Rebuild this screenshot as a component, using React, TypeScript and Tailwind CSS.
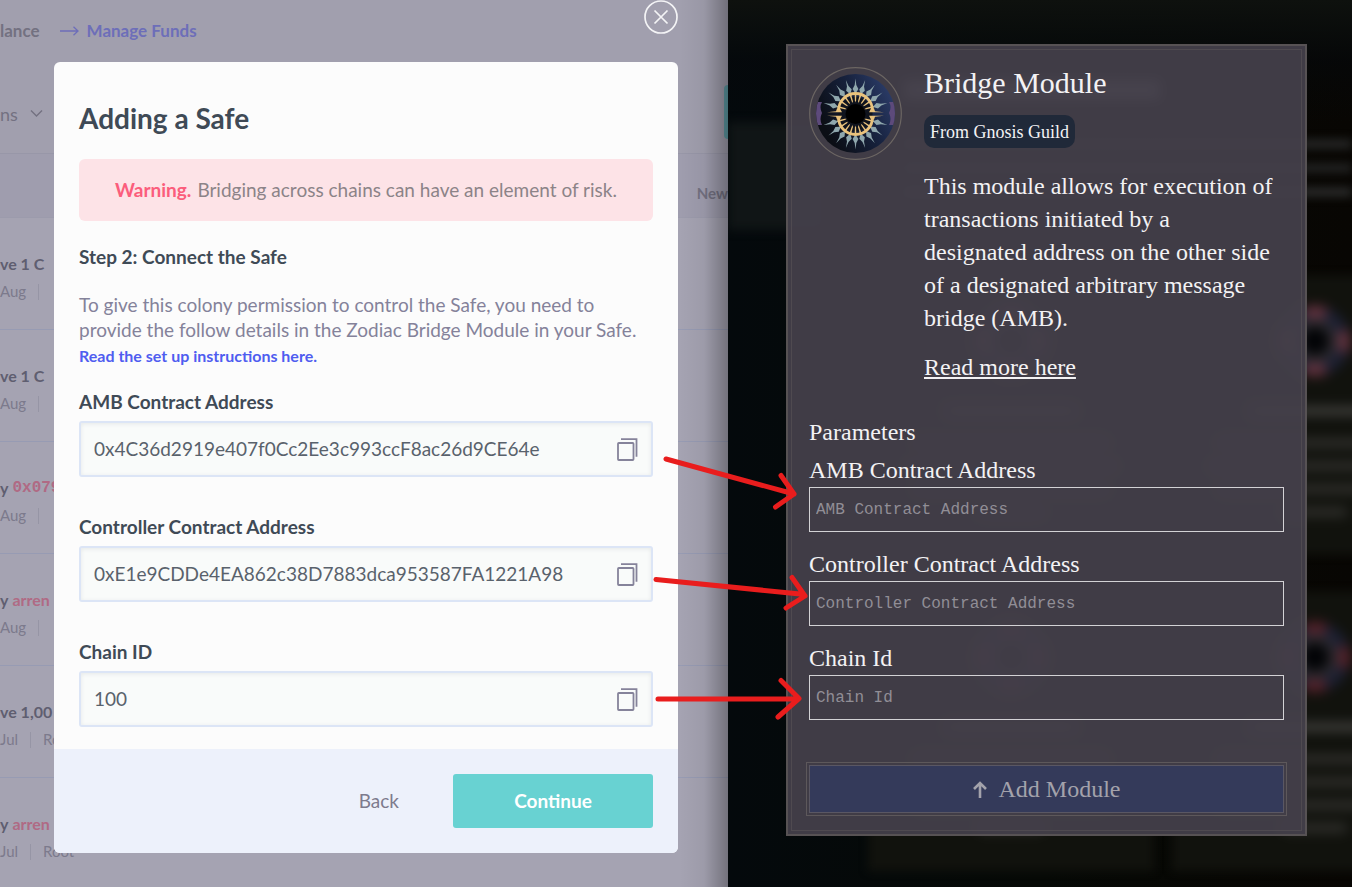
import React from "react";

const sans = "font-[Lato,'Noto_Sans',sans-serif]";
const serif = "font-['Liberation_Serif',serif]";

type Activity = { verb: string; subject?: string; mono?: boolean; date: string; domain?: string };

const activities: Activity[] = [
  { verb: "ve 1 C", date: "Aug" },
  { verb: "ve 1 C", date: "Aug" },
  { verb: "y", subject: "0x079", mono: true, date: "Aug" },
  { verb: "y", subject: "arren", date: "Aug" },
  { verb: "ve 1,00", date: "Jul", domain: "Root" },
  { verb: "y", subject: "arren", date: "Jul", domain: "Root" },
];

function ColonyPage() {
  return (
    <div aria-hidden="true" className="absolute inset-0 overflow-hidden bg-[#a19fae]">
      <div className="flex h-[62px] items-center gap-5 text-[17px] font-bold">
        <span className="text-[#737181]">lance</span>
        <span className="flex items-center gap-2 text-[#6d6eb9]">
          <svg width="19" height="10" viewBox="0 0 19 10" fill="none" stroke="currentColor" strokeWidth="1.3">
            <path d="M0 5h18M13.5 0.8L18 5l-4.5 4.2" />
          </svg>
          Manage Funds
        </span>
      </div>
      <div className="flex h-[92px] items-center justify-between border-b border-[#9897a8]">
        <div className="flex items-center gap-3 pt-3 text-lg text-[#737181]">
          ns
          <svg width="13" height="9" viewBox="0 0 13 9" fill="none" stroke="currentColor" strokeWidth="1.4">
            <path d="M1 1.5l5.5 5.5L12 1.5" />
          </svg>
        </div>
        <div className="mt-2 h-[54px] w-1 rounded-l-sm bg-[#5f9ba5]" />
      </div>
      <div className="flex h-[64px] items-center justify-end border-b border-[#9c9bac] bg-[#9f9dae] pt-4 text-[15px] font-bold text-[#737181]">
        New
      </div>
      <ul className="bg-[#a5a3b2]">
        {activities.map((a, i) => (
          <li key={i} className="flex h-[112px] flex-col justify-center gap-1 border-b border-[#979bb3] pt-2">
            <div className="flex h-6 items-center gap-1 text-base font-bold text-[#5f5e70]">
              <span>{a.verb}</span>
              {a.subject && (
                <span className={a.mono ? "font-['Liberation_Mono',monospace] text-[#b06a84]" : "text-[#b06a84]"}>
                  {a.subject}
                </span>
              )}
            </div>
            <div className="flex h-6 items-center gap-3 text-[15px] text-[#7c7a8c]">
              <span>{a.date}</span>
              <span className="h-4 w-px bg-[#9695a5]" />
              {a.domain && <span>{a.domain}</span>}
            </div>
          </li>
        ))}
      </ul>
      <div className="absolute inset-y-0 right-0 w-12 bg-gradient-to-r from-transparent via-black/5 to-black/30" />
    </div>
  );
}

function CopyIcon() {
  return (
    <svg width="21" height="23" viewBox="0 0 21 23" fill="none" stroke="#85839a" strokeWidth="1.8">
      <rect x="1" y="5" width="15.5" height="17" rx="0.8" />
      <path d="M4 1.2h15.5v17.5" />
    </svg>
  );
}

function SafeField({ id, label, value }: { id: string; label: string; value: string }) {
  return (
    <div className="flex flex-col gap-[7px]">
      <label htmlFor={id} className="text-[19px] leading-6 font-bold text-[#3f4a56]">
        {label}
      </label>
      <div className="flex h-14 items-center rounded-[3px] border-2 border-[#dce5f6] bg-[#f9fbfa] px-[13px] shadow-[inset_0_1px_4px_rgba(60,70,80,0.1)]">
        <input
          id={id}
          readOnly
          defaultValue={value}
          className="min-w-0 flex-1 bg-transparent text-[19px] text-[#59626c] outline-none"
        />
        <button type="button" aria-label={`Copy ${label}`}>
          <CopyIcon />
        </button>
      </div>
    </div>
  );
}

function SafeDialog() {
  return (
    <div className="relative flex flex-col gap-7 pr-[50px] pl-[54px]">
      <div className="flex justify-end">
        <button type="button" aria-label="Close">
          <svg width="34" height="34" viewBox="0 0 34 34" fill="none" stroke="#f4f4f6" strokeWidth="1.7">
            <circle cx="17" cy="17" r="16" />
            <path d="M10.5 10.5l13 13M23.5 10.5l-13 13" />
          </svg>
        </button>
      </div>
      <section className="overflow-hidden rounded-md bg-[#fcfcfc]">
        <div className="px-[25px] pt-10 pb-[22px]">
          <h1 className="text-[28px] leading-8 font-bold text-[#3f4a56]">Adding a Safe</h1>
          <p className="mt-[25px] flex h-[62px] items-center justify-center gap-[6px] rounded-md bg-[#fde3e7] text-[19px] text-[#8c8388]">
            <strong className="text-[#fb5d7c]">Warning.</strong>
            <span>Bridging across chains can have an element of risk.</span>
          </p>
          <h2 className="mt-6 text-[19px] leading-6 font-bold text-[#3f4a56]">Step 2: Connect the Safe</h2>
          <p className="mt-[23px] text-[19px] leading-[25px] text-[#84829a]">
            To give this colony permission to control the Safe, you need to
            <br />
            provide the follow details in the Zodiac Bridge Module in your Safe.
            <br />
            <a href="#setup" className="text-base leading-[25px] font-bold text-[#4f5df0]">
              Read the set up instructions here.
            </a>
          </p>
          <form className="mt-[22px] flex flex-col gap-[38px]">
            <SafeField id="safe-amb" label="AMB Contract Address" value="0x4C36d2919e407f0Cc2Ee3c993ccF8ac26d9CE64e" />
            <SafeField
              id="safe-controller"
              label="Controller Contract Address"
              value="0xE1e9CDDe4EA862c38D7883dca953587FA1221A98"
            />
            <SafeField id="safe-chain" label="Chain ID" value="100" />
          </form>
        </div>
        <div className="flex items-center justify-end gap-[54px] bg-[#edf1fb] px-[25px] py-[25px] text-[19px]">
          <button type="button" className="text-[#7d7b8d]">
            Back
          </button>
          <button type="button" className="h-[54px] w-[200px] rounded-[3px] bg-[#68d2d2] font-bold text-white">
            Continue
          </button>
        </div>
      </section>
    </div>
  );
}

function BlurredEmblem({ tint }: { tint: string }) {
  return (
    <svg width="84" height="84" viewBox="0 0 84 84" fill="none" className="shrink-0 blur-[4px]">
      <circle cx="42" cy="42" r="28" stroke="#1c2034" strokeWidth="14" />
      <circle cx="42" cy="42" r="28" stroke={tint} strokeWidth="14" strokeDasharray="20 24" strokeDashoffset="10" />
      <circle cx="42" cy="42" r="19" stroke="#2b2a30" strokeWidth="9" />
      <circle cx="42" cy="42" r="13" fill="#020306" />
    </svg>
  );
}

function BlurredModule({ tint }: { tint: string }) {
  return (
    <div className="flex h-[280px] w-[286px] shrink-0 flex-col items-center bg-[#11120d] pt-6 blur-[4px]">
      <BlurredEmblem tint={tint} />
      <div className="mt-6 h-2 w-32 bg-[#454542] blur-[4px]" />
      <div className="mt-6 flex flex-col items-center gap-[15px] blur-[4px]">
        <div className="h-2 w-48 bg-[#343431]" />
        <div className="h-2 w-52 bg-[#343431]" />
        <div className="h-2 w-48 bg-[#343431]" />
        <div className="h-2 w-16 bg-[#343431]" />
      </div>
    </div>
  );
}

function ZodiacBackdrop() {
  return (
    <div aria-hidden="true" className="absolute inset-0 overflow-hidden bg-gradient-to-r from-[#04090c] via-[#060906] to-[#080603]">
      <div className="h-[122px] bg-gradient-to-b from-[#0e110e] via-[#05080b]/60 to-transparent pt-20 pl-44">
        <div className="h-5 w-64 bg-[#77777d] blur-[6px]" />
      </div>
      <div className="h-[108px] w-24 bg-[#101516] blur-[5px]" />
      <div className="-mt-[90px] flex flex-col gap-4 pl-44 blur-[5px]">
        <div className="h-2 bg-[#2a2b2b]" />
        <div className="h-2 bg-[#262727]" />
        <div className="h-2 bg-[#2f3030]" />
      </div>
      <div className="mt-[79px] flex flex-col gap-9 pl-[140px]">
        <div className="flex gap-[18px]">
          <BlurredModule tint="#6a3442" />
          <BlurredModule tint="#6a3442" />
        </div>
        <div className="flex gap-[18px]">
          <BlurredModule tint="#5a222c" />
          <BlurredModule tint="#5a222c" />
        </div>
      </div>
    </div>
  );
}

const rays = [-75, -55, -36, -17, 0, 17, 36, 55, 75];

function EyeEmblem() {
  return (
    <svg width="93" height="93" viewBox="0 0 93 93" className="shrink-0" role="img" aria-label="Bridge Module emblem">
      <defs>
        <linearGradient id="iris" x1="0" y1="0.8" x2="1" y2="0.3">
          <stop offset="0.2" stopColor="#0b0e15" />
          <stop offset="0.6" stopColor="#17223e" />
          <stop offset="1" stopColor="#304272" />
        </linearGradient>
        <clipPath id="disc">
          <circle cx="46.5" cy="46.5" r="39.5" />
        </clipPath>
      </defs>
      <circle cx="46.5" cy="46.5" r="45.8" fill="none" stroke="#6c6663" strokeWidth="1.2" />
      <g clipPath="url(#disc)">
        <rect width="93" height="93" fill="url(#iris)" />
        <path d="M5 35h8q-3 5 0 11q-3 6 0 12H5z" fill="#5d4a7b" />
        <path d="M88 35h-8q3 5 0 11q3 6 0 12h8z" fill="#5d4a7b" />
      </g>
      <circle cx="46.5" cy="47" r="17" fill="#0f131d" />
      {[0, 180].map((half) => (
        <g key={half} transform={`rotate(${half} 46.5 47)`}>
          {rays.map((angle) => (
            <g key={angle} transform={`rotate(${angle} 46.5 44.5)`}>
              <path d="M46.5 11.500L47.3 18L49.400 22L47.200 25.500L47.6 28H45.4L45.8 25.500L43.600 22L45.7 18Z" fill="#8fa7ad" />
              <path d="M45.700 28L46.5 26L47.300 28L47.100 33.500L46.5 35.500L45.900 33.500Z" fill="#e9c27c" />
            </g>
          ))}
          <path d="M29.5 43.500A17 17 0 0 1 63.500 43.500" fill="none" stroke="#e9c27c" strokeWidth="2.8" />
          <path d="M18 45.300L27 44.300L28 41.500H31L33 45.300ZM75 45.300L66 44.300L65 41.500H62L60 45.300Z" fill="#e9c27c" />
        </g>
      ))}
      <circle cx="46.5" cy="47" r="10" fill="#000" />
    </svg>
  );
}

function ModuleField({ id, label }: { id: string; label: string }) {
  return (
    <div className="flex flex-col gap-[5px]">
      <label htmlFor={id} className="text-2xl leading-6">
        {label}
      </label>
      <input
        id={id}
        placeholder={label}
        className="h-[45px] w-full border border-[#d3d2d5] bg-transparent px-[6px] font-['Liberation_Mono',monospace] text-base outline-none placeholder:text-[#918e96]"
      />
    </div>
  );
}

function BridgeModuleCard() {
  return (
    <section className="relative border-2 border-[#575254] bg-[#433f4a]/95 px-[21px] pt-[21px] pb-[18px] text-[#f3f2f4] outline outline-[#4f4a50] -outline-offset-[6px]">
      <div className="flex items-start gap-[22px]">
        <EyeEmblem />
        <div className="min-w-0 flex-1">
          <h2 className="text-[30px] leading-8">Bridge Module</h2>
          <p className="mt-4 flex h-[33px] w-fit items-center rounded-[10px] bg-[#202939] px-[6px] text-lg">
            From Gnosis Guild
          </p>
          <p className="mt-[22px] text-2xl leading-[33px]">
            This module allows for execution of
            <br />
            transactions initiated by a
            <br />
            designated address on the other side
            <br />
            of a designated arbitrary message
            <br />
            bridge (AMB).
          </p>
          <a href="#more" className="mt-4 inline-block text-2xl leading-[33px] underline underline-offset-2">
            Read more here
          </a>
        </div>
      </div>
      <h3 className="mt-9 text-2xl leading-6">Parameters</h3>
      <form className="mt-[14px] flex flex-col gap-5">
        <ModuleField id="module-amb" label="AMB Contract Address" />
        <ModuleField id="module-controller" label="Controller Contract Address" />
        <ModuleField id="module-chain" label="Chain Id" />
      </form>
      <div className="-mx-[3px] mt-[42px] border border-[#5d585b] p-[2px]">
        <button
          type="button"
          className="flex h-12 w-full items-center justify-center gap-3 border border-[#5a5763] bg-[#343a5a] text-2xl text-[#a3a2ab]"
        >
          <svg width="14" height="17" viewBox="0 0 14 17" fill="none" stroke="currentColor" strokeWidth="2.6">
            <path d="M7 17V2M1 8L7 2l6 6" />
          </svg>
          Add Module
        </button>
      </div>
    </section>
  );
}

function MappingArrows() {
  return (
    <svg
      aria-hidden="true"
      width="180"
      height="300"
      viewBox="648 440 180 300"
      fill="none"
      stroke="#e91d1d"
      strokeWidth="5"
      strokeLinecap="round"
      strokeLinejoin="round"
      className="pointer-events-none absolute top-[440px] -left-20"
    >
      <path d="M666 459L794 494M781 475.500L794 494L775.500 507" />
      <path d="M656 579.500L800 594M792 577.500L805 596L786 608" />
      <path d="M658 699H798M781 680.500L799 698.500L778 717" />
    </svg>
  );
}

export default function App() {
  return (
    <main className="grid min-h-screen grid-cols-[7fr_6fr]">
      <div className={`relative pb-8 ${sans}`}>
        <ColonyPage />
        <SafeDialog />
      </div>
      <div className={`relative pt-11 pr-[45px] pb-12 pl-[58px] ${serif}`}>
        <ZodiacBackdrop />
        <BridgeModuleCard />
        <MappingArrows />
      </div>
    </main>
  );
}
